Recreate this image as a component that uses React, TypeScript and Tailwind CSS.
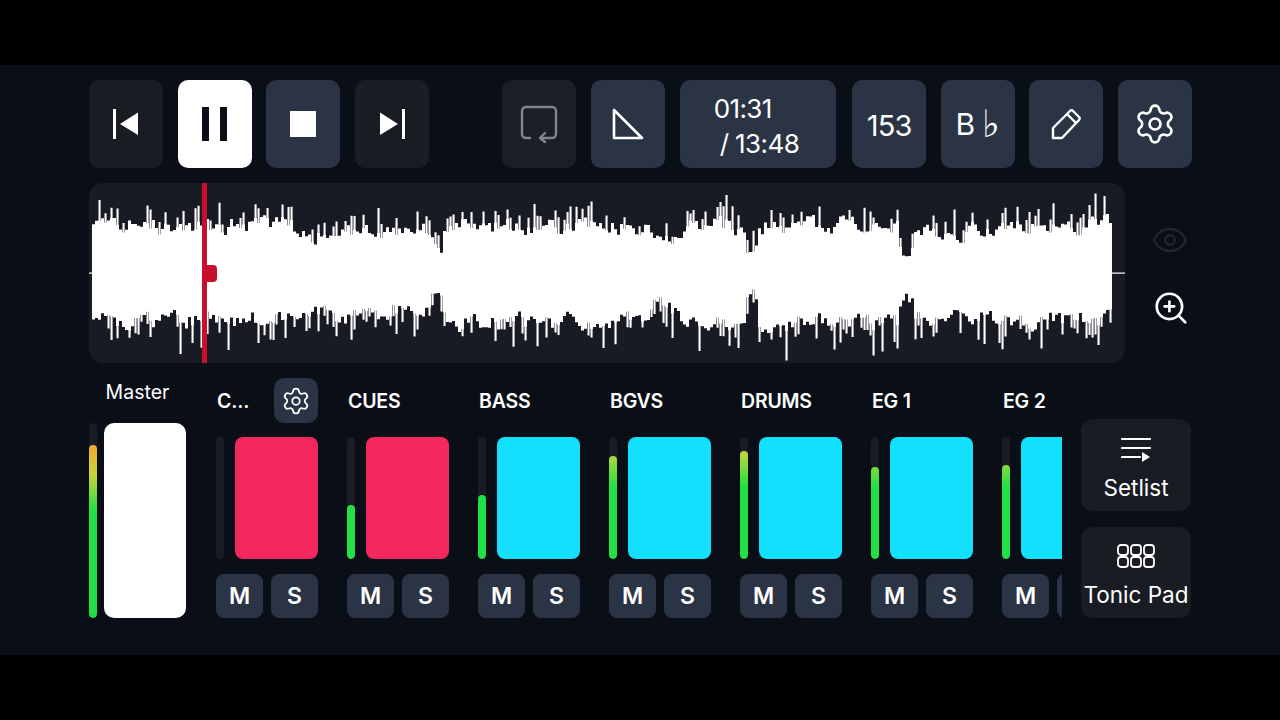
import { Eye, Settings, ZoomIn } from "lucide-react";

const font = "font-['Inter','Liberation_Sans',sans-serif]";

const topPts = [[92,226],[200,226],[290,226],[300,236],[340,236],[360,229],[425,229],[432,245],[440,245],[444,226],[648,226],[652,240],[678,240],[682,226],[743,226],[746,249],[755,249],[758,226],[897,224],[900,257],[903,248],[911,248],[914,233],[1000,231],[1020,224],[1113,224]];
const botPts = [[92,320],[295,319],[302,308],[330,310],[340,318],[380,318],[392,305],[420,317],[430,297],[440,297],[446,323],[648,321],[652,300],[665,310],[678,315],[682,320],[743,320],[746,298],[755,298],[758,324],[897,324],[900,287],[903,296],[911,296],[914,317],[1000,317],[1020,321],[1113,319]];

function lerp(pts: number[][], x: number) {
  for (let i = 1; i < pts.length; i++) {
    if (x <= pts[i][0]) {
      const [x0, y0] = pts[i - 1];
      const [x1, y1] = pts[i];
      return y0 + ((y1 - y0) * (x - x0)) / (x1 - x0);
    }
  }
  return pts[pts.length - 1][1];
}

// seeded random so the wave form stays the same on every render
function makeWave() {
  let seed = 48271;
  const rnd = () => {
    seed = (seed * 16807) % 2147483647;
    return seed / 2147483647;
  };
  let d = "";
  let nt = 0;
  let nb = 0;
  const ox = 89;
  const oy = 183;
  for (let x = 92; x < 1112; x += 3) {
    nt = 0.5 * nt + (rnd() - 0.5) * 15;
    nb = 0.5 * nb + (rnd() - 0.5) * 15;
    const t = lerp(topPts, x) + nt;
    const b = lerp(botPts, x) + nb;
    d += `M${x - ox} ${(t - oy).toFixed(1)}h3V${(b - oy).toFixed(1)}h-3Z`;
    // thin spikes that stick out of the body
    if (rnd() < 0.36) {
      const s = t - 6 - 20 * rnd() * rnd() - 8 * rnd();
      d += `M${x - ox + 0.5} ${(s - oy).toFixed(1)}h2.1V${(t + 2 - oy).toFixed(1)}h-2.1Z`;
    }
    if (rnd() < 0.36) {
      const s = b + 6 + 24 * rnd() * rnd() + 8 * rnd();
      d += `M${x - ox + 0.5} ${(b - 2 - oy).toFixed(1)}h2.1V${(s - oy).toFixed(1)}h-2.1Z`;
    }
  }
  return d;
}
const wave = makeWave();

const channels = [
  { name: "C...", color: "bg-[#f3285e]", level: 0, gear: true },
  { name: "CUES", color: "bg-[#f3285e]", level: 54 },
  { name: "BASS", color: "bg-[#12e0fc]", level: 64 },
  { name: "BGVS", color: "bg-[#12e0fc]", level: 103 },
  { name: "DRUMS", color: "bg-[#12e0fc]", level: 108 },
  { name: "EG 1", color: "bg-[#12e0fc]", level: 92 },
  { name: "EG 2", color: "bg-[#12e0fc]", level: 94, clipped: true },
];

function Btn({ className = "", children }: { className?: string; children?: React.ReactNode }) {
  return (
    <div className={`w-[74px] h-[88px] shrink-0 rounded-[10px] flex items-center justify-center text-white ${className}`}>
      {children}
    </div>
  );
}

function Channel({ name, color, level, gear, clipped }: { name: string; color: string; level: number; gear?: boolean; clipped?: boolean }) {
  return (
    <div className="w-[102px] shrink-0 flex flex-col">
      <div className="h-[45px] flex items-center justify-between">
        <span className="text-white text-[19.5px] font-semibold tracking-[-0.2px] pt-[3px] pl-[1px]">{name}</span>
        {gear && (
          <div className="w-[44px] h-[45px] rounded-[10px] bg-[#2b3445] flex items-center justify-center">
            <Settings size={30} strokeWidth={1.4} className="text-white" />
          </div>
        )}
      </div>
      <div className="mt-[14px] h-[122px] flex justify-between">
        <div className="w-[8px] h-full rounded-full bg-[#1a1c24] flex items-end overflow-hidden">
          <div
            className="w-full rounded-full bg-[linear-gradient(to_top,#20e045_0,#20e045_72px,#b5d93c_104px,#eab534_122px)]"
            style={{ height: level, backgroundSize: "100% 122px", backgroundPosition: "bottom", backgroundRepeat: "no-repeat" }}
          />
        </div>
        <div className={`w-[83px] h-full rounded-[8px] ${color}`} />
      </div>
      <div className="mt-[15px] flex justify-between">
        <div className="w-[47px] h-[44px] rounded-[8px] bg-[#2b3445] flex items-center justify-center text-white text-[23px] font-semibold">M</div>
        <div className="w-[47px] h-[44px] rounded-[8px] bg-[#2b3445] flex items-center justify-center text-white text-[23px] font-semibold">{clipped ? "" : "S"}</div>
      </div>
    </div>
  );
}

export default function App() {
  return (
    <div className={`w-[1280px] h-[720px] bg-black py-[65px] overflow-hidden ${font}`}>
      <div className="h-[590px] bg-[#0a0e17] pl-[89px] pr-[88px] pt-[15px]">
        {/* transport */}
        <div className="flex justify-between">
          <div className="flex gap-[14.6px]">
            <Btn className="bg-[#1a1c24]">
              <svg width="30" height="30" viewBox="0 0 30 30" fill="white">
                <rect x="2" y="0" width="3" height="30" />
                <path d="M27 3.5V26L9 15Z" />
              </svg>
            </Btn>
            <Btn className="bg-white">
              <svg width="28" height="34" viewBox="0 0 28 34" fill="#0a0e17">
                <rect x="1" y="0" width="7" height="34" />
                <rect x="19" y="0" width="7" height="34" />
              </svg>
            </Btn>
            <Btn className="bg-[#2b3445]">
              <div className="w-[26px] h-[26px] bg-white" />
            </Btn>
            <Btn className="bg-[#1a1c24]">
              <svg width="30" height="30" viewBox="0 0 30 30" fill="white">
                <rect x="25" y="0" width="3" height="30" />
                <path d="M3 3.5V26L21 15Z" />
              </svg>
            </Btn>
          </div>
          <div className="flex gap-[14.6px]">
            <Btn className="bg-[#191e29]">
              <svg width="38" height="38" viewBox="0 0 38 38" fill="none" stroke="#7f858e" strokeWidth="2.4" strokeLinecap="round" strokeLinejoin="round">
                <path d="M10 33H6a4 4 0 0 1-4-4V6a4 4 0 0 1 4-4h26a4 4 0 0 1 4 4v23a4 4 0 0 1-4 4H21" />
                <path d="M25 28l-5 5 5 4" />
              </svg>
            </Btn>
            <Btn className="bg-[#2b3445]">
              <svg width="32" height="32" viewBox="0 0 32 32" fill="none" stroke="white" strokeWidth="2.6" strokeLinejoin="round">
                <path d="M2 2V30H30Z" />
              </svg>
            </Btn>
            <div className="w-[156px] h-[88px] mr-[2px] rounded-[10px] bg-[#2b3445] text-white text-[26px] leading-[35px] pt-[4px] flex flex-col justify-center tracking-[-0.6px]">
              <div className="pl-[34px]">01:31</div>
              <div className="pl-[40px]">/ 13:48</div>
            </div>
            <Btn className="bg-[#2b3445] text-[29px] tracking-[-0.8px] pt-[4px]">153</Btn>
            <Btn className="bg-[#2b3445] text-[30px]">
              <span>B</span>
              <span className="ml-[7px] leading-none font-['DejaVu_Sans',sans-serif] font-extralight text-[38px] text-white">♭</span>
            </Btn>
            <Btn className="bg-[#2b3445]">
              <svg width="30" height="32" viewBox="0 0 30 32" fill="none" stroke="white" strokeWidth="2.4" strokeLinejoin="round">
                <path d="M2 30V20L19 3a2 2 0 0 1 3 0l6 6a2 2 0 0 1 0 3L11 30Z" />
                <path d="M16 6l9 9" />
              </svg>
            </Btn>
            <Btn className="bg-[#2b3445]">
              <Settings size={44} strokeWidth={1.45} />
            </Btn>
          </div>
        </div>

        {/* wave form */}
        <div className="mt-[15px] flex">
          <div className="relative w-[1036px] h-[180px] rounded-[14px] bg-[#191b24] overflow-hidden">
            <svg width="1036" height="180" viewBox="0 0 1036 180">
              <rect x="0" y="89.5" width="1036" height="1.2" fill="white" />
              <path d={wave} fill="white" />
            </svg>
            <div className="absolute left-[113px] top-0 w-[5px] h-full bg-[#c8102e]" />
            <div className="absolute left-[116px] top-[82px] w-[12px] h-[17px] rounded-r-[4px] bg-[#c8102e]" />
          </div>
          <div className="flex-1 flex flex-col items-center pt-[38px] pl-[22px] gap-[30px]">
            <Eye size={38} strokeWidth={1.5} className="text-[#23262f]" />
            <ZoomIn size={38} strokeWidth={1.7} className="text-white ml-[3px]" />
          </div>
        </div>

        {/* mixer */}
        <div className="mt-[15px] flex">
          <div className="w-[97px] shrink-0">
            <div className="h-[28px] flex items-center justify-center text-white text-[19.5px] pt-[2px]">Master</div>
            <div className="mt-[17px] h-[195px] flex justify-between">
              <div className="w-[8px] h-full rounded-full bg-[#1a1c24] flex items-end overflow-hidden">
                <div className="w-full h-[173px] rounded-full bg-[linear-gradient(to_top,#20e045_0,#20e045_108px,#c8d23a_142px,#f2ab2e_173px)]" />
              </div>
              <div className="w-[82px] h-full rounded-[10px] bg-white" />
            </div>
          </div>
          <div className="ml-[30px] w-[846px] shrink-0 flex gap-[29px] overflow-hidden">
            {channels.map((c) => (
              <Channel key={c.name} {...c} />
            ))}
          </div>
          <div className="ml-[19px] mt-[41px] w-[110px] flex flex-col gap-[16px] text-white text-[22.5px]">
            <div className="h-[92px] rounded-[12px] bg-[#1a1c24] flex flex-col items-center pt-[18px]">
              <svg width="30" height="26" viewBox="0 0 30 26" fill="none" stroke="white" strokeWidth="2.2" strokeLinecap="round">
                <path d="M1 2H29M1 11H29M1 20H19" />
                <path d="M21 15V25L29 20Z" fill="white" strokeWidth="0" />
              </svg>
              <span className="mt-[10px] leading-[30px]">Setlist</span>
            </div>
            <div className="h-[91px] rounded-[12px] bg-[#1a1c24] flex flex-col items-center pt-[17px]">
              <svg width="38" height="24" viewBox="0 0 38 24" fill="none" stroke="white" strokeWidth="1.8">
                <rect x="1" y="1" width="10" height="10" rx="3" />
                <rect x="14" y="1" width="10" height="10" rx="3" />
                <rect x="27" y="1" width="10" height="10" rx="3" />
                <rect x="1" y="13" width="10" height="10" rx="3" />
                <rect x="14" y="13" width="10" height="10" rx="3" />
                <rect x="27" y="13" width="10" height="10" rx="3" />
              </svg>
              <span className="mt-[12px] leading-[30px] whitespace-nowrap">Tonic Pad</span>
            </div>
          </div>
        </div>
      </div>
    </div>
  );
}
